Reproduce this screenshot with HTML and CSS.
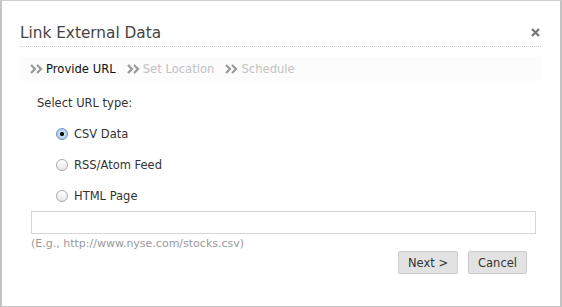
FILE: index.html
```html
<!DOCTYPE html>
<html lang="en">
<head>
  <meta charset="UTF-8" />
  <title>Link External Data</title>
  <link rel="stylesheet" href="styles.css">
</head>
<body>
  <div class="dialog">
    <div class="dialog-header">
      <h1>Link External Data</h1>
      <svg class="close" width="9" height="9" viewBox="0 0 9 9">
        <path d="M1 1 L8 8 M8 1 L1 8" stroke="#777" stroke-width="2.2" fill="none"/>
      </svg>
    </div>

    <div class="steps">
      <span class="step active">
        <svg class="arrows" width="13" height="10" viewBox="0 0 13 10"><path d="M1 1 L5 5 L1 9 M7 1 L11 5 L7 9" stroke="#999" stroke-width="2.2" fill="none"/></svg>Provide URL
      </span>
      <span class="step">
        <svg class="arrows" width="13" height="10" viewBox="0 0 13 10"><path d="M1 1 L5 5 L1 9 M7 1 L11 5 L7 9" stroke="#999" stroke-width="2.2" fill="none"/></svg>Set Location
      </span>
      <span class="step">
        <svg class="arrows" width="13" height="10" viewBox="0 0 13 10"><path d="M1 1 L5 5 L1 9 M7 1 L11 5 L7 9" stroke="#999" stroke-width="2.2" fill="none"/></svg>Schedule
      </span>
    </div>

    <div class="form">
      <p class="prompt">Select URL type:</p>
      <label class="option"><span class="radio checked"></span>CSV Data</label>
      <label class="option"><span class="radio"></span>RSS/Atom Feed</label>
      <label class="option"><span class="radio"></span>HTML Page</label>

      <input type="text" class="url-input" />
      <div class="hint">(E.g., http://www.nyse.com/stocks.csv)</div>

      <div class="actions">
        <button>Next &gt;</button>
        <button>Cancel</button>
      </div>
    </div>
  </div>
</body>
</html>
```

FILE: styles.css
```css
body {
  margin: 0;
  background: #fff;
  font-family: "DejaVu Sans", Verdana, sans-serif;
}
.dialog {
  width: 558px;
  height: 305px;
  border: 2px solid #c4c4c4;
  border-top: 1px solid #d0d0d0;
  background: #fff;
}
.dialog-header {
  margin: 0 19px 0 18px;
  padding-top: 24px;
  height: 21px;
  display: flex;
  justify-content: space-between;
  align-items: flex-start;
  border-bottom: 1px dotted #c8c8c8;
}
.dialog-header h1 {
  margin: 0;
  font-size: 15.3px;
  line-height: 17px;
  font-weight: normal;
  color: #444;
}
.close {
  margin-top: 3px;
  margin-right: 1px;
}
.steps {
  margin: 10px 19px 0 18px;
  height: 24px;
  background: #fcfcfc;
  display: flex;
  align-items: center;
  padding-left: 10px;
  gap: 11px;
}
.step {
  display: flex;
  align-items: center;
  font-size: 11.6px;
  color: #c2c2c2;
}
.step.active {
  color: #111;
}
.arrows {
  margin-right: 3px;
}
.form {
  padding: 0 24px 0 29px;
}
.prompt {
  margin: 15px 0 8px 6px;
  font-size: 11.5px;
  line-height: 14px;
  color: #333;
}
.option {
  display: flex;
  align-items: center;
  margin-left: 25px;
  height: 31px;
  font-size: 11.5px;
  color: #333;
}
.radio {
  width: 10px;
  height: 10px;
  border: 1px solid #aaa;
  border-radius: 50%;
  background: linear-gradient(#fff, #e6e6e6);
  margin-right: 6px;
}
.radio.checked {
  border-color: #6f93c4;
  background: radial-gradient(circle, #111 0, #111 1.8px, #cfe2f8 2.4px, #8fb5e6 100%);
}
.url-input {
  display: block;
  width: 100%;
  height: 23px;
  margin-top: 0;
  border: 1px solid #d6d6d6;
  box-sizing: border-box;
  background: #fff;
}
.hint {
  margin-top: 3px;
  font-size: 11px;
  line-height: 13px;
  color: #999;
}
.actions {
  display: flex;
  justify-content: flex-end;
  gap: 10px;
  margin-top: 1px;
  padding-right: 9px;
}
button {
  font-family: inherit;
  font-size: 11.5px;
  color: #333;
  height: 23px;
  padding: 0 9px;
  border: 1px solid #ccc;
  border-radius: 2px;
  background: #e2e2e2;
}
```
